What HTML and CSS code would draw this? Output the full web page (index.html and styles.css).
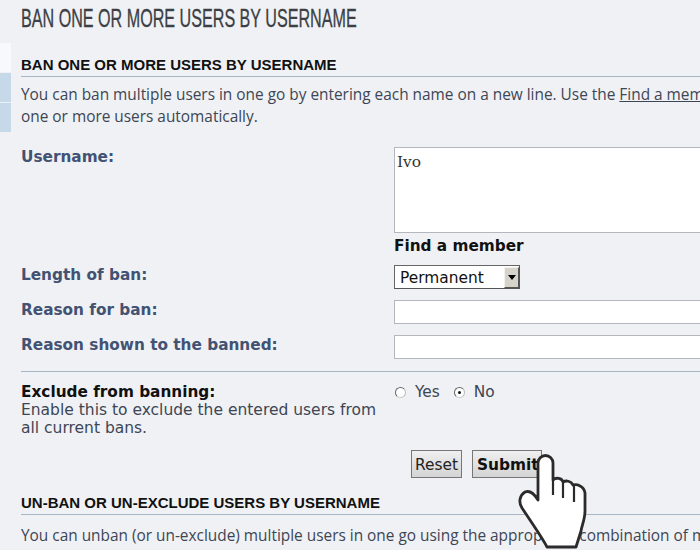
FILE: index.html
```html
<!DOCTYPE html>
<html lang="en">
<head>
<meta charset="utf-8">
<title>Ban users</title>
<link rel="stylesheet" href="styles.css">
</head>
<body>
<div class="shell">
  <nav class="side">
    <div class="tab tab-light"></div>
    <div class="tab"></div>
    <div class="tab"></div>
  </nav>
  <main class="content">
    <h1 class="title">BAN ONE OR MORE USERS BY USERNAME</h1>
    <h3 class="section">BAN ONE OR MORE USERS BY USERNAME</h3>
    <p class="intro">You can ban multiple users in one go by entering each name on a new line. Use the <a class="link">Find a member</a> facility to look up and add<br>one or more users automatically.</p>
    <div class="row row-user">
      <label class="label">Username:</label>
      <div class="field">
        <div class="textarea">Ivo</div>
        <strong class="find">Find a member</strong>
      </div>
    </div>
    <div class="row row-length">
      <label class="label">Length of ban:</label>
      <div class="field">
        <div class="select"><span class="select-text">Permanent</span><span class="select-btn"><svg width="8" height="5" viewBox="0 0 8 5"><path d="M0 0h8L4 5z" fill="#000"/></svg></span></div>
      </div>
    </div>
    <div class="row row-input">
      <label class="label">Reason for ban:</label>
      <div class="field"><div class="input"></div></div>
    </div>
    <div class="row row-input">
      <label class="label">Reason shown to the banned:</label>
      <div class="field"><div class="input"></div></div>
    </div>
    <hr class="rule">
    <div class="row row-exclude">
      <div class="label-block">
        <strong class="ex-title">Exclude from banning:</strong>
        <span class="ex-text">Enable this to exclude the entered users from all current bans.</span>
      </div>
      <div class="field radios">
        <span class="radio"></span><span class="radio-label">Yes</span>
        <span class="radio radio-on"></span><span class="radio-label">No</span>
      </div>
    </div>
    <div class="buttons">
      <span class="btn btn-reset">Reset</span>
      <span class="btn btn-main">Submit</span>
    </div>
    <h3 class="section section-2">UN-BAN OR UN-EXCLUDE USERS BY USERNAME</h3>
    <p class="intro intro-2">You can unban (or un-exclude) multiple users in one go using the appropriate combination of mouse and keyboard for your<br>computer and browser. Excluded users are emphasised.</p>
  </main>
</div>
<svg class="cursor" width="70" height="97" viewBox="0 0 70 97">
  <path d="M20 10A7.500 7.500 0 0 1 35 10V27C38 24 44 25 45 29C48 27 53 28 55 32C59 31 66 33 67 40V58C67 66 64 72 63 78L58 94H29C26 88 18 76 14 70L4 55C0 49 2 42 7 39C12 37 17 42 20 47Z" fill="#fff" stroke="#2b2b2b" stroke-width="2.800" stroke-linejoin="round"/>
  <path d="M35 27V42M45 29V45M56 33V49" fill="none" stroke="#2b2b2b" stroke-width="2.200"/>
</svg>
</body>
</html>
```
FILE: styles.css
```css
html, body { margin: 0; padding: 0; height: 100%; }
body { width: 700px; height: 550px; overflow: hidden; background: #f0f1f4; position: relative; color: #3c4654; font-family: "Open Sans", sans-serif; }
.shell { display: flex; width: 1000px; }
.side { width: 11px; padding-top: 43px; flex: none; display: flex; flex-direction: column; }
.tab { height: 29px; background: #c6d9e9; margin-bottom: 1px; }
.tab-light { background: #f8f9fa; }
.content { margin-left: 10px; width: 900px; }
.title { margin: 0; height: 43px; font: 400 25px/36px "Liberation Sans", sans-serif; color: #3c4044; white-space: nowrap; -webkit-text-stroke: .3px #3c4044; transform: scaleX(.645); transform-origin: left center; }
.section { margin: 0; padding: 0 0 3px; margin-top: 13px; font: 700 15px/17px "Liberation Sans", sans-serif; color: #111; border-bottom: 1px solid #a9b6c6; }
.intro { margin: 0; padding-top: 7px; font: 400 15.400px/22px "Open Sans", sans-serif; color: #3d4654; width: 900px; }
.link { color: #3d4654; text-decoration: underline; }
.row { display: flex; }
.label, .label-block { width: 373px; flex: none; }
.label { padding-top: 1px; font: 700 15.300px/18px "DejaVu Sans", sans-serif; color: #425273; }
.field { flex: 1; }
.row-user { margin-top: 19px; }
.textarea { box-sizing: border-box; height: 86px; width: 330px; border: 1px solid #b4b8be; background: #fff; padding: 5px 2px; font: 400 15.400px/18px "DejaVu Serif", serif; color: #333; }
.find { display: block; font: 700 15.300px/17px "DejaVu Sans", sans-serif; color: #111; margin-top: 5px; }
.row-length { margin-top: 10px; }
.select { box-sizing: border-box; display: flex; width: 126px; height: 24px; border: 1px solid; border-color: #666 #555 #555 #666; background: #fff; }
.select-text { flex: 1; padding-left: 5px; font: 400 15.400px/24px "DejaVu Sans", sans-serif; color: #111; }
.select-btn { width: 15px; margin: 1px 0 0; display: flex; align-items: center; justify-content: center; background: #d6d3cb; box-sizing: border-box; border: 1px solid; border-color: #f4f2ee #555 #555 #f4f2ee; }
.row-input { margin-top: 11px; }
.input { box-sizing: border-box; height: 24px; width: 330px; border: 1px solid #b4b8be; background: #fff; }
.rule { margin: 12px 0 0; border: 0; border-top: 1px solid #a9b6c6; }
.row-exclude { margin-top: 11px; }
.label-block { font: 400 15.500px/18px "DejaVu Sans", sans-serif; color: #3d4654; padding-right: 15px; box-sizing: border-box; }
.ex-title { display: block; color: #111; font-size: 15.300px; }
.ex-text { display: block; }
.radios { display: flex; align-items: center; height: 18px; font: 400 15.400px/18px "DejaVu Sans", sans-serif; }
.radio { box-sizing: border-box; width: 11px; height: 11px; border-radius: 50%; border: 1px solid; border-color: #666 #bbb #ccc #666; background: #fff; margin: 1px 0 0 1px; position: relative; }
.radio-on::after { content: ""; position: absolute; left: 3px; top: 3px; width: 3px; height: 3px; border-radius: 50%; background: #111; }
.radio-label { margin: 0 13px 0 9px; }
.buttons { display: flex; gap: 10px; margin: 13px 0 0 390px; }
.btn { box-sizing: border-box; height: 28px; border: 1px solid #777; background: linear-gradient(#efefef, #d4d4d4); font: 400 15.400px/28px "DejaVu Sans", sans-serif; color: #222; }
.btn-reset { width: 51px; text-align: center; }
.btn-main { font-weight: 700; color: #111; width: 70px; padding-left: 4px; white-space: nowrap; overflow: hidden; }
.section-2 { margin-top: 16px; }
.intro-2 { padding-top: 10px; }
.cursor { position: absolute; left: 518px; top: 453px; }
```
